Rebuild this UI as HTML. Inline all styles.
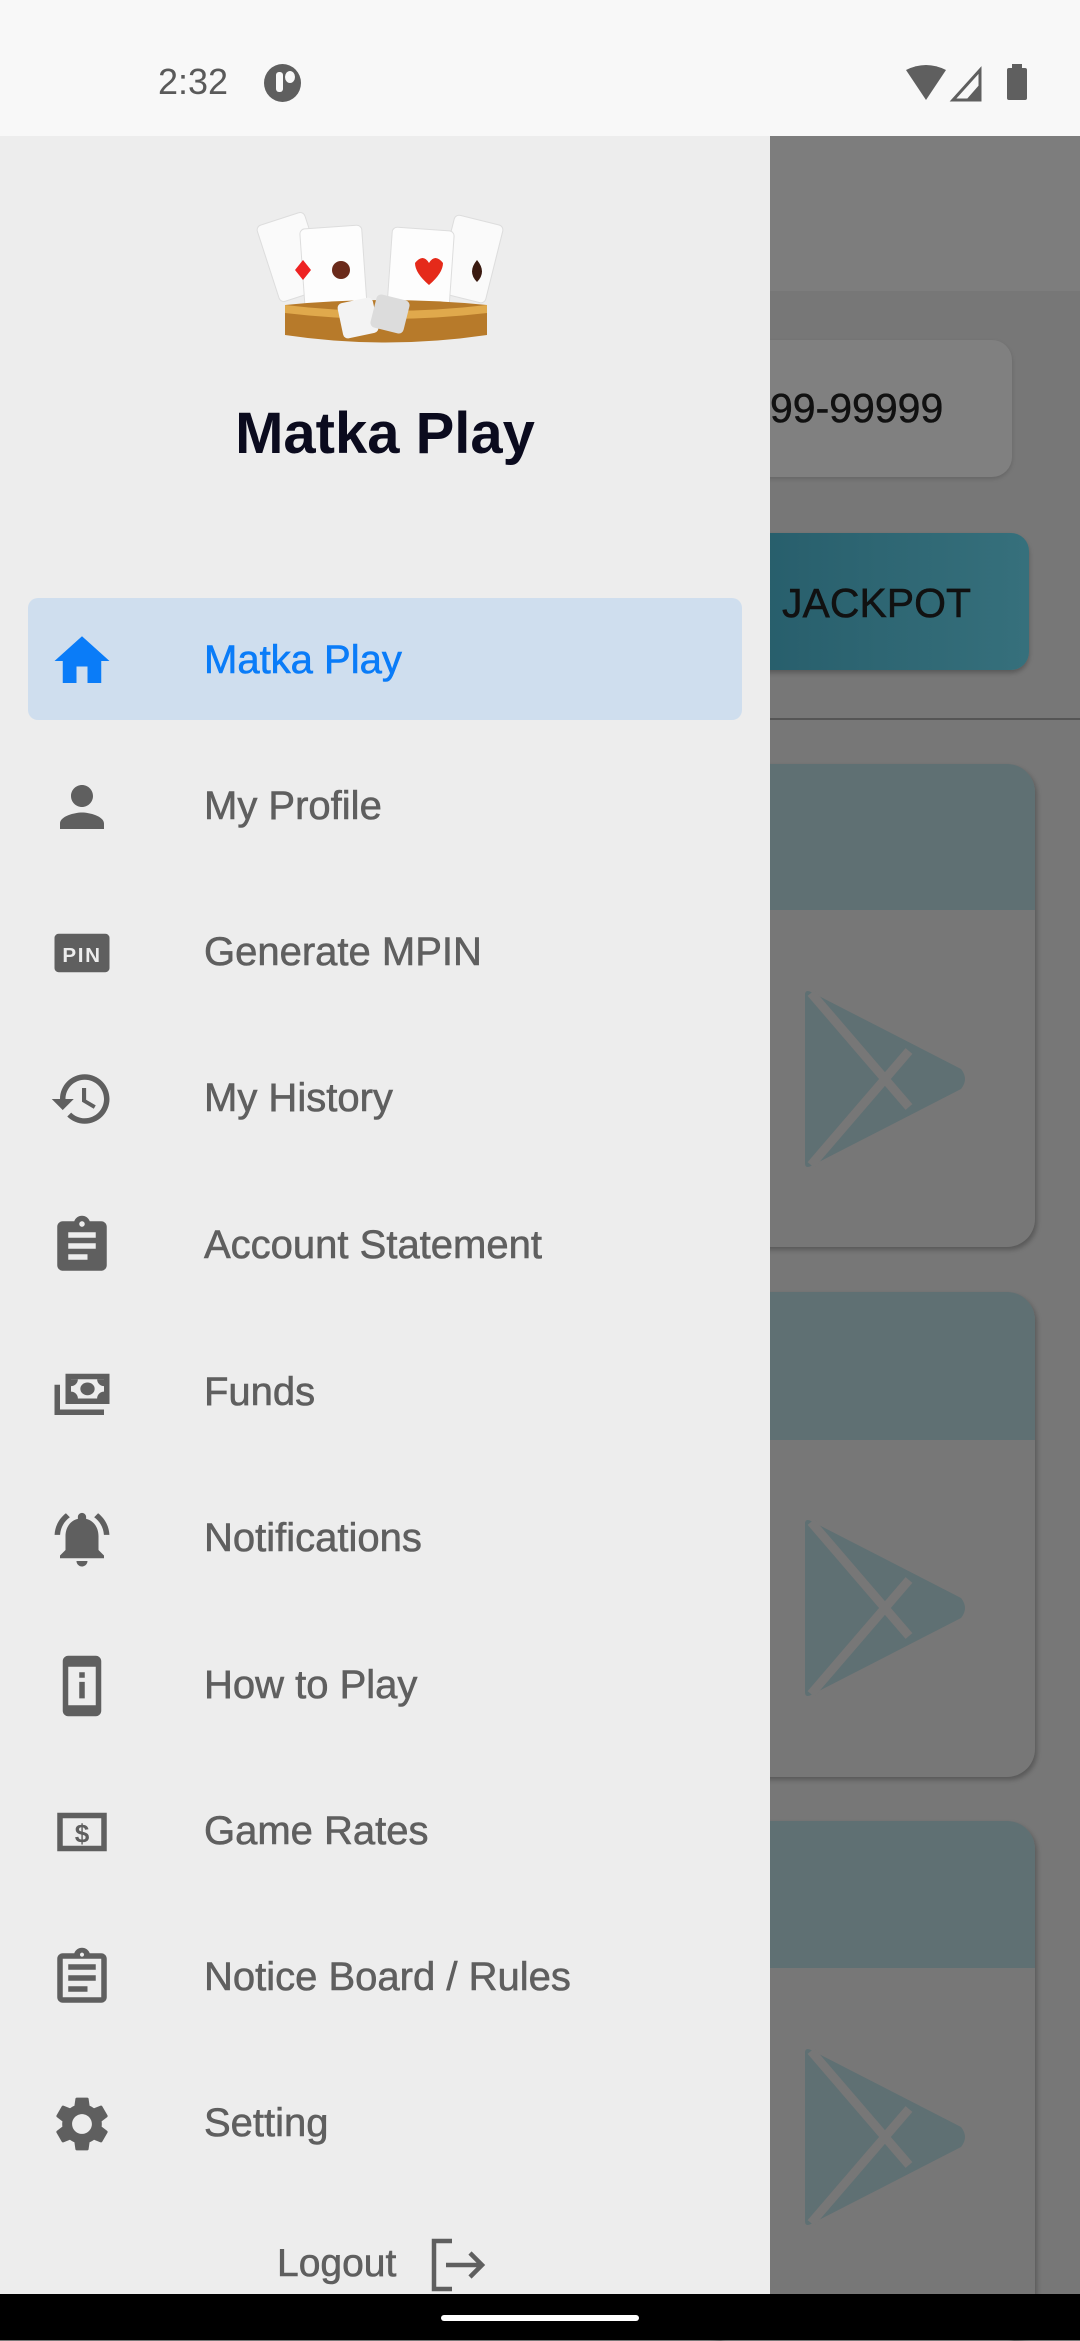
<!DOCTYPE html>
<html><head><meta charset="utf-8"><style>
*{margin:0;padding:0;box-sizing:border-box}
body{width:1080px;height:2340px;position:relative;overflow:hidden;background:#777;font-family:"Liberation Sans",sans-serif}
.abs{position:absolute}
.item{position:absolute;left:0;width:770px;height:146px}
.item svg{position:absolute;left:49px;top:40px;width:66px;height:66px;fill:#5f5f5f}
.item span{position:absolute;left:204px;top:49px;font-size:40px;color:#5f5f5f;line-height:46px;-webkit-text-stroke:0.6px #5f5f5f}
</style></head><body>
<div class="abs" style="left:0;top:0;width:1080px;height:136px;background:#f8f8f8"></div>
<div class="abs" style="left:158px;top:61px;font-size:36px;color:#5a5a5a">2:32</div>
<div class="abs" style="left:264px;top:64px;width:37px;height:38px;border-radius:50%;background:#5f5f5f"></div>
<div class="abs" style="left:276px;top:72px;width:7px;height:20px;background:#f8f8f8;border-radius:3px"></div>
<div class="abs" style="left:285px;top:71px;width:10px;height:12px;background:#f8f8f8;border-radius:50%"></div>
<svg class="abs" style="left:906px;top:64px" width="130" height="38" viewBox="0 0 130 38">
<path d="M0 6 Q20 -4 40 6 L20 36Z" fill="#5f5f5f"/>
<path d="M47 36 L74 6 L74 36Z" fill="none" stroke="#5f5f5f" stroke-width="3"/>
<path d="M60 36 L74 20 L74 36Z" fill="#5f5f5f"/>
<rect x="101" y="4" width="20" height="32" rx="2" fill="#5f5f5f"/><rect x="106" y="0" width="10" height="5" fill="#5f5f5f"/>
</svg>
<div class="abs" style="left:770px;top:136px;width:310px;height:155px;background:#7d7d7d"></div>
<div class="abs" style="left:700px;top:340px;width:312px;height:137px;background:#808080;border-radius:20px;box-shadow:0 2px 4px rgba(0,0,0,.15)"></div>
<div class="abs" style="left:770px;top:385px;font-size:41px;color:#111;-webkit-text-stroke:0.5px #111">99-99999</div>
<div class="abs" style="left:700px;top:533px;width:329px;height:137px;background:linear-gradient(90deg,#245a68,#36707c);border-radius:18px;box-shadow:0 3px 5px rgba(0,0,0,.25)"></div>
<div class="abs" style="left:782px;top:580px;font-size:41px;color:#111;-webkit-text-stroke:0.5px #111">JACKPOT</div>
<div class="abs" style="left:770px;top:718px;width:310px;height:2px;background:#555"></div>
<div class="abs" style="left:700px;top:764px;width:335px;height:483px;background:#777;border-radius:28px;overflow:hidden;box-shadow:2px 3px 5px rgba(0,0,0,.25)"><div style="height:146px;background:#5f7073"></div></div>
<div class="abs" style="left:700px;top:1292px;width:335px;height:485px;background:#777;border-radius:28px;overflow:hidden;box-shadow:2px 3px 5px rgba(0,0,0,.25)"><div style="height:148px;background:#5f7073"></div></div>
<div class="abs" style="left:700px;top:1821px;width:335px;height:520px;background:#777;border-radius:28px;overflow:hidden;box-shadow:2px 3px 5px rgba(0,0,0,.25)"><div style="height:147px;background:#5f7073"></div></div>
<svg class="abs" style="left:805px;top:989px" width="162" height="180" viewBox="0 0 162 180"><path d="M0 6 Q0 0 6 3 L156 80 Q164 90 156 100 L6 177 Q0 180 0 174Z" fill="#5f7073"/><path d="M6 4 L104 118 M6 176 L104 62" stroke="#777" stroke-width="9"/></svg>
<svg class="abs" style="left:805px;top:1518px" width="162" height="180" viewBox="0 0 162 180"><path d="M0 6 Q0 0 6 3 L156 80 Q164 90 156 100 L6 177 Q0 180 0 174Z" fill="#5f7073"/><path d="M6 4 L104 118 M6 176 L104 62" stroke="#777" stroke-width="9"/></svg>
<svg class="abs" style="left:805px;top:2047px" width="162" height="180" viewBox="0 0 162 180"><path d="M0 6 Q0 0 6 3 L156 80 Q164 90 156 100 L6 177 Q0 180 0 174Z" fill="#5f7073"/><path d="M6 4 L104 118 M6 176 L104 62" stroke="#777" stroke-width="9"/></svg>
<div class="abs" style="left:0;top:136px;width:770px;height:2158px;background:#ededed"></div>
<svg class="abs" style="left:255px;top:205px" width="262" height="145" viewBox="0 0 262 145">
<g stroke="#ddd" stroke-width="1">
<rect x="12" y="12" width="50" height="80" rx="5" fill="#fafafa" transform="rotate(-18 37 52)"/>
<rect x="190" y="14" width="50" height="80" rx="5" fill="#fafafa" transform="rotate(14 215 54)"/>
<rect x="48" y="22" width="62" height="100" rx="5" fill="#fdfdfd" transform="rotate(-4 79 72)"/>
<rect x="134" y="24" width="62" height="100" rx="5" fill="#fdfdfd" transform="rotate(4 165 74)"/>
</g>
<path d="M40 65 l8 -10 l8 10 l-8 10z" fill="#e22"/>
<circle cx="86" cy="65" r="9" fill="#6a2a1a"/>
<path d="M160 58 q8 -10 14 0 q6 -10 14 0 q0 10 -14 22 q-14 -12 -14 -22z" fill="#e52a1a"/>
<path d="M222 55 q10 12 0 22 q-10 -10 0 -22z" fill="#3a1a10"/>
<path d="M30 100 Q130 90 232 100 L232 130 Q130 145 30 130Z" fill="#b77a2a"/>
<path d="M30 100 Q130 112 232 100 L232 108 Q130 120 30 108Z" fill="#e0a94c"/>
<rect x="85" y="95" width="36" height="36" rx="5" fill="#f3f3f3" transform="rotate(-12 103 113)"/>
<rect x="118" y="92" width="34" height="34" rx="5" fill="#dcdcdc" transform="rotate(14 135 109)"/>
</svg>
<div class="abs" style="left:0;top:400px;width:770px;text-align:center;font-size:58px;font-weight:bold;color:#0b0b1e">Matka Play</div>
<div class="abs" style="left:28px;top:598px;width:714px;height:122px;background:#cfdeee;border-radius:10px"></div>
<div class="item" style="top:588px"><svg viewBox="0 0 24 24" style="fill:#0a7cf8"><path d="M10 20v-6h4v6h5v-8h3L12 3 2 12h3v8z"/></svg><span style="color:#0a7cf8;-webkit-text-stroke:0.6px #0a7cf8">Matka Play</span></div>
<div class="item" style="top:734px"><svg viewBox="0 0 24 24"><path d="M12 12c2.21 0 4-1.79 4-4s-1.79-4-4-4-4 1.79-4 4 1.79 4 4 4zm0 2c-2.67 0-8 1.34-8 4v2h16v-2c0-2.66-5.330-4-8-4z"/></svg><span>My Profile</span></div>
<div class="item" style="top:880px"><svg viewBox="0 0 24 24"><rect x="2" y="5" width="20" height="14" rx="1.5"/><text x="12" y="15.2" font-size="7.5" font-weight="bold" fill="#ededed" text-anchor="middle" font-family="Liberation Sans" letter-spacing="0.6">PIN</text></svg><span>Generate MPIN</span></div>
<div class="item" style="top:1026px"><svg viewBox="0 0 24 24"><path d="M13 3c-4.97 0-9 4.03-9 9H1l3.89 3.89.07.14L9 12H6c0-3.87 3.13-7 7-7s7 3.13 7 7-3.13 7-7 7c-1.93 0-3.68-.79-4.94-2.06l-1.42 1.42C8.27 19.990 10.51 21 13 21c4.97 0 9-4.03 9-9s-4.03-9-9-9zm-1 5v5l4.28 2.54.72-1.21-3.5-2.08V8H12z"/></svg><span>My History</span></div>
<div class="item" style="top:1173px"><svg viewBox="0 0 24 24"><path d="M19 3h-4.18C14.4 1.84 13.3 1 12 1c-1.3 0-2.4.84-2.82 2H5c-1.1 0-2 .9-2 2v14c0 1.1.9 2 2 2h14c1.1 0 2-.9 2-2V5c0-1.1-.9-2-2-2zm-7 0c.55 0 1 .45 1 1s-.45 1-1 1-1-.45-1-1 .45-1 1-1zm2 14H7v-2h7v2zm3-4H7v-2h10v2zm0-4H7V7h10v2z"/></svg><span>Account Statement</span></div>
<div class="item" style="top:1320px"><svg viewBox="0 0 24 24"><path d="M4 9H2v11h18v-2H4z"/><path d="M6 5v11h16V5H6zm2 2h12v7H8V7z"/><ellipse cx="14" cy="10.5" rx="2.6" ry="2.3"/><path d="M8 7h2.5a2.5 2.5 0 0 1-2.5 2.5zM20 7h-2.5a2.5 2.5 0 0 0 2.5 2.5zM8 14h2.5A2.5 2.5 0 0 0 8 11.5zM20 14h-2.5a2.5 2.5 0 0 1 2.5-2.5z"/></svg><span>Funds</span></div>
<div class="item" style="top:1466px"><svg viewBox="0 0 24 24"><path d="M7.58 4.08L6.15 2.65C3.75 4.48 2.17 7.3 2.03 10.5h2c.15-2.65 1.51-4.97 3.55-6.42zm12.39 6.42h2c-.15-3.2-1.73-6.02-4.12-7.850l-1.42 1.43c2.02 1.45 3.39 3.77 3.54 6.42zM18 11c0-3.07-1.64-5.640-4.5-6.32V4c0-.83-.67-1.5-1.5-1.5s-1.5.67-1.5 1.5v.68C7.63 5.36 6 7.92 6 11v5l-2 2v1h16v-1l-2-2v-5zm-6 11c.14 0 .27-.01.4-.04.65-.14 1.18-.58 1.44-1.18.1-.24.15-.5.15-.78h-4c.01 1.1.9 2 2.01 2z"/></svg><span>Notifications</span></div>
<div class="item" style="top:1613px"><svg viewBox="0 0 24 24"><path d="M17 1H7c-1.1 0-2 .9-2 2v18c0 1.1.9 2 2 2h10c1.1 0 2-.9 2-2V3c0-1.1-.9-2-2-2zm0 18H7V5h10v14z"/><rect x="11" y="7" width="2" height="2"/><rect x="11" y="10.5" width="2" height="6"/></svg><span>How to Play</span></div>
<div class="item" style="top:1759px"><svg viewBox="0 0 24 24"><path d="M3 5h18v14H3zM5 7v10h14V7z"/><text x="12" y="15.8" font-size="9.5" font-weight="bold" text-anchor="middle" font-family="Liberation Sans">$</text></svg><span>Game Rates</span></div>
<div class="item" style="top:1905px"><svg viewBox="0 0 24 24"><path d="M19 3h-4.18C14.4 1.84 13.3 1 12 1c-1.3 0-2.4.84-2.82 2H5c-1.1 0-2 .9-2 2v14c0 1.1.9 2 2 2h14c1.1 0 2-.9 2-2V5c0-1.1-.9-2-2-2zm-7-.25c.41 0 .75.34.75.75s-.34.75-.75.75-.75-.34-.75-.75.34-.75.75-.75zM19 19H5V5h14v14zM7 15h7v2H7zm0-4h10v2H7zm0-4h10v2H7z"/></svg><span>Notice Board / Rules</span></div>
<div class="item" style="top:2051px"><svg viewBox="0 0 24 24"><path d="M19.14 12.94c.04-.3.06-.61.06-.94 0-.32-.02-.64-.07-.94l2.03-1.58c.18-.14.23-.41.12-.61l-1.92-3.32c-.12-.22-.37-.29-.59-.22l-2.39.96c-.5-.38-1.03-.7-1.62-.94l-.36-2.54c-.04-.24-.24-.41-.48-.41h-3.84c-.24 0-.43.17-.47.41l-.36 2.54c-.59.24-1.130.57-1.62.94l-2.39-.96c-.22-.08-.47 0-.59.22L2.74 8.87c-.12.21-.08.47.12.61l2.03 1.58c-.05.3-.09.63-.09.94s.02.64.07.94l-2.03 1.58c-.18.14-.23.41-.12.61l1.92 3.32c.12.22.37.29.59.22l2.39-.96c.5.38 1.03.7 1.62.94l.36 2.54c.05.24.24.41.48.41h3.84c.24 0 .44-.17.47-.41l.36-2.54c.59-.24 1.13-.56 1.62-.94l2.39.96c.22.08.47 0 .59-.22l1.92-3.32c.12-.22.07-.47-.12-.61l-2.01-1.58zM12 15.6c-1.98 0-3.6-1.62-3.6-3.6s1.62-3.6 3.6-3.6 3.6 1.62 3.6 3.6-1.62 3.6-3.6 3.6z"/></svg><span>Setting</span></div>
<div class="abs" style="left:277px;top:2242px;font-size:39px;color:#5f5f5f;-webkit-text-stroke:0.6px #5f5f5f">Logout</div>
<svg class="abs" style="left:430px;top:2238px" width="58" height="54" viewBox="0 0 58 54"><path d="M22 3H4v48h18" fill="none" stroke="#5f5f5f" stroke-width="4.5"/><path d="M16 27h36M40 15l12 12-12 12" fill="none" stroke="#5f5f5f" stroke-width="4.5"/></svg>
<div class="abs" style="left:0;top:2294px;width:1080px;height:46px;background:#000"></div>
<div class="abs" style="left:441px;top:2315px;width:198px;height:6px;border-radius:3px;background:#fff"></div>
</body></html>
